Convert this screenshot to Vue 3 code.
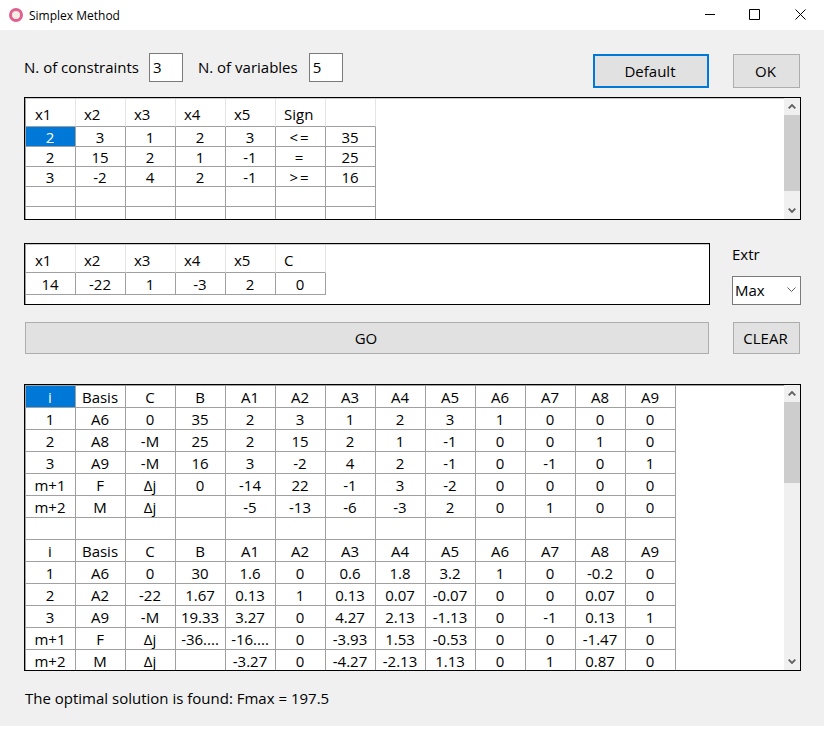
<script setup>
const head1 = ['x1', 'x2', 'x3', 'x4', 'x5', 'Sign', '']
const rows1 = [
  ['2', '3', '1', '2', '3', '<=', '35'],
  ['2', '15', '2', '1', '-1', '=', '25'],
  ['3', '-2', '4', '2', '-1', '>=', '16'],
  ['', '', '', '', '', '', ''],
  ['', '', '', '', '', '', '']
]
const head2 = ['x1', 'x2', 'x3', 'x4', 'x5', 'C']
const row2 = ['14', '-22', '1', '-3', '2', '0']
const tableHead = ['i', 'Basis', 'C', 'B', 'A1', 'A2', 'A3', 'A4', 'A5', 'A6', 'A7', 'A8', 'A9']
const rows3 = [
  tableHead,
  ['1', 'A6', '0', '35', '2', '3', '1', '2', '3', '1', '0', '0', '0'],
  ['2', 'A8', '-M', '25', '2', '15', '2', '1', '-1', '0', '0', '1', '0'],
  ['3', 'A9', '-M', '16', '3', '-2', '4', '2', '-1', '0', '-1', '0', '1'],
  ['m+1', 'F', 'Δj', '0', '-14', '22', '-1', '3', '-2', '0', '0', '0', '0'],
  ['m+2', 'M', 'Δj', '', '-5', '-13', '-6', '-3', '2', '0', '1', '0', '0'],
  ['', '', '', '', '', '', '', '', '', '', '', '', ''],
  tableHead,
  ['1', 'A6', '0', '30', '1.6', '0', '0.6', '1.8', '3.2', '1', '0', '-0.2', '0'],
  ['2', 'A2', '-22', '1.67', '0.13', '1', '0.13', '0.07', '-0.07', '0', '0', '0.07', '0'],
  ['3', 'A9', '-M', '19.33', '3.27', '0', '4.27', '2.13', '-1.13', '0', '-1', '0.13', '1'],
  ['m+1', 'F', 'Δj', '-36....', '-16....', '0', '-3.93', '1.53', '-0.53', '0', '0', '-1.47', '0'],
  ['m+2', 'M', 'Δj', '', '-3.27', '0', '-4.27', '-2.13', '1.13', '0', '1', '0.87', '0']
]
</script>

<template>
  <div class="window">
    <header class="titlebar">
      <span class="app-icon"></span>
      <span class="app-title">Simplex Method</span>
      <span class="win-btn win-min"><svg width="12" height="12" viewBox="0 0 12 12"><path d="M1 5.5h10" stroke="#000" fill="none"/></svg></span>
      <span class="win-btn win-max"><svg width="12" height="12" viewBox="0 0 12 12"><path d="M.5.5h10v10H.5z" stroke="#000" fill="none"/></svg></span>
      <span class="win-btn win-close"><svg width="12" height="12" viewBox="0 0 12 12"><path d="M.5.5l10 10M10.5.5l-10 10" stroke="#000" fill="none"/></svg></span>
    </header>

    <main class="content">
      <div class="top-row">
        <label class="lbl">N. of constraints</label>
        <span class="num-box box-a">3</span>
        <label class="lbl second">N. of variables</label>
        <span class="num-box box-b">5</span>
        <button class="btn btn-default">Default</button>
        <button class="btn btn-ok">OK</button>
      </div>

      <section class="frame frame-1">
        <div class="sheet sheet-light">
          <div class="row head-row">
            <div v-for="(h, i) in head1" :key="i" class="cell head">{{ h }}</div>
          </div>
          <div v-for="(r, ri) in rows1" :key="ri" class="row" :class="ri === 4 ? 'row-22' : 'row-20'">
            <div
              v-for="(c, ci) in r"
              :key="ci"
              class="cell"
              :class="{ sel: ri === 0 && ci === 0, sign: ci === 5 }"
            >{{ c }}</div>
          </div>
        </div>
        <div class="scrollbar">
          <span class="arrow"><svg width="8" height="5" viewBox="0 0 8 5"><path d="M.7 4.3L4 1l3.3 3.3" stroke="#606060" stroke-width="1.8" fill="none"/></svg></span>
          <span class="track"><span class="thumb thumb-1"></span></span>
          <span class="arrow"><svg width="8" height="5" viewBox="0 0 8 5"><path d="M.7.7L4 4 7.3.7" stroke="#606060" stroke-width="1.8" fill="none"/></svg></span>
        </div>
      </section>

      <div class="obj-row">
        <section class="frame frame-2">
          <div class="sheet sheet-light">
            <div class="row head-row">
              <div v-for="(h, i) in head2" :key="i" class="cell head">{{ h }}</div>
            </div>
            <div class="row row-22">
              <div v-for="(c, i) in row2" :key="i" class="cell">{{ c }}</div>
            </div>
          </div>
        </section>
        <div class="extr">
          <span class="extr-label">Extr</span>
          <div class="combo">
            <span>Max</span>
            <svg width="9" height="5" viewBox="0 0 9 5"><path d="M.5.5l4 4 4-4" stroke="#606060" fill="none"/></svg>
          </div>
        </div>
      </div>

      <div class="action-row">
        <button class="btn btn-go">GO</button>
        <button class="btn btn-clear">CLEAR</button>
      </div>

      <section class="frame frame-3">
        <div class="sheet">
          <div v-for="(r, ri) in rows3" :key="ri" class="row row-22">
            <div
              v-for="(c, ci) in r"
              :key="ci"
              class="cell"
              :class="{ sel: ri === 0 && ci === 0 }"
            >{{ c }}</div>
          </div>
        </div>
        <div class="scrollbar">
          <span class="arrow"><svg width="8" height="5" viewBox="0 0 8 5"><path d="M.7 4.3L4 1l3.3 3.3" stroke="#606060" stroke-width="1.8" fill="none"/></svg></span>
          <span class="track"><span class="thumb thumb-3"></span></span>
          <span class="arrow"><svg width="8" height="5" viewBox="0 0 8 5"><path d="M.7.7L4 4 7.3.7" stroke="#606060" stroke-width="1.8" fill="none"/></svg></span>
        </div>
      </section>

      <p class="status">The optimal solution is found: Fmax = 197.5</p>
    </main>
  </div>
</template>

<style scoped>
.window {
  width: 824px;
  height: 729px;
  background: #fff;
  overflow: hidden;
  font-family: "Open Sans", "Noto Sans", "Liberation Sans", sans-serif;
  font-size: 15px;
  color: #000;
}
.titlebar {
  height: 30px;
  display: flex;
  align-items: center;
  background: #fff;
  padding-left: 9px;
}
.app-icon {
  width: 14px;
  height: 14px;
  box-sizing: border-box;
  border-radius: 50%;
  border: 3px solid #e0608f;
  background: #f3ece4;
}
.app-title {
  margin-left: 6px;
  font-size: 12px;
}
.win-btn {
  display: flex;
  width: 12px;
  height: 12px;
}
.win-min { margin-left: auto; }
.win-max { margin-left: 33px; }
.win-close { margin-left: 34px; margin-right: 17px; }

.content {
  height: 696px;
  box-sizing: border-box;
  background: #f0f0f0;
  padding: 23px 23px 0 24px;
  display: flex;
  flex-direction: column;
}
.top-row {
  display: flex;
  align-items: flex-start;
  height: 35px;
  margin-bottom: 9px;
}
.lbl {
  line-height: 29px;
  white-space: nowrap;
}
.num-box {
  width: 34px;
  height: 29px;
  box-sizing: border-box;
  border: 1px solid #7a7a7a;
  background: #fff;
  line-height: 27px;
  padding-left: 3px;
}
.box-a { margin-left: 10px; }
.box-b { margin-left: 11px; }
.lbl.second { margin-left: 15px; }
.btn {
  font: inherit;
  color: #000;
  background: #e1e1e1;
  border: 1px solid #adadad;
  box-sizing: border-box;
  padding: 0 2px 0 0;
}
.btn-default {
  width: 116px;
  height: 34px;
  margin-top: 1px;
  margin-left: auto;
  border: 2px solid #0078d7;
}
.btn-ok {
  width: 67px;
  height: 34px;
  margin-top: 1px;
  margin-left: 24px;
  margin-right: 1px;
}
.frame {
  display: flex;
  box-sizing: border-box;
  background: #fff;
  border: 1px solid #000;
  overflow: hidden;
}
.frame-1 { height: 123px; }
.frame-2 { width: 686px; height: 62px; }
.frame-3 { height: 287px; margin-top: 30px; }
.sheet {
  flex: 1;
  min-width: 0;
  border-left: 1px solid #a0a0a0;
  border-top: 1px solid #a0a0a0;
}
.sheet-light { border-top-color: #c8c8c8; }
.row { display: flex; }
.head-row { height: 28px; }
.row-20 { height: 20px; }
.row-22 { height: 22px; }
.cell {
  width: 50px;
  height: 100%;
  box-sizing: border-box;
  border-right: 1px solid #a0a0a0;
  border-bottom: 1px solid #a0a0a0;
  padding: 0 1px 0 0;
  white-space: nowrap;
  overflow: hidden;
  display: flex;
  align-items: center;
  justify-content: center;
}
.cell.head {
  justify-content: flex-start;
  padding-top: 2px;
  padding-left: 8px;
  border-right-color: #e4e4e4;
}
.cell.head:first-child { padding-left: 9px; }
.cell.sel {
  background: #0078d7;
  color: #fff;
}
.cell.sign { letter-spacing: 2px; }
.scrollbar {
  width: 16px;
  flex: none;
  display: flex;
  flex-direction: column;
  background: #f0f0f0;
}
.arrow {
  height: 17px;
  flex: none;
  display: flex;
  align-items: center;
  justify-content: center;
}
.track { flex: 1; }
.thumb { display: block; background: #cdcdcd; }
.thumb-1 { height: 76px; }
.thumb-3 { height: 81px; }
.obj-row {
  display: flex;
  margin-top: 23px;
}
.extr {
  margin-left: 22px;
  width: 69px;
}
.extr-label {
  display: block;
  height: 33px;
  line-height: 22px;
}
.combo {
  height: 29px;
  box-sizing: border-box;
  border: 1px solid #7a7a7a;
  background: #fff;
  display: flex;
  align-items: center;
  justify-content: space-between;
  padding: 0 4px 2px 2px;
}
.action-row {
  display: flex;
  margin-top: 17px;
  margin-left: 1px;
  margin-right: 1px;
  gap: 24px;
}
.btn-go { flex: 1; height: 32px; }
.btn-clear { width: 67px; height: 32px; }
.status {
  margin: 17px 0 0 1px;
  line-height: 20px;
}
</style>

<style>
html, body { background: #fff; }
</style>
